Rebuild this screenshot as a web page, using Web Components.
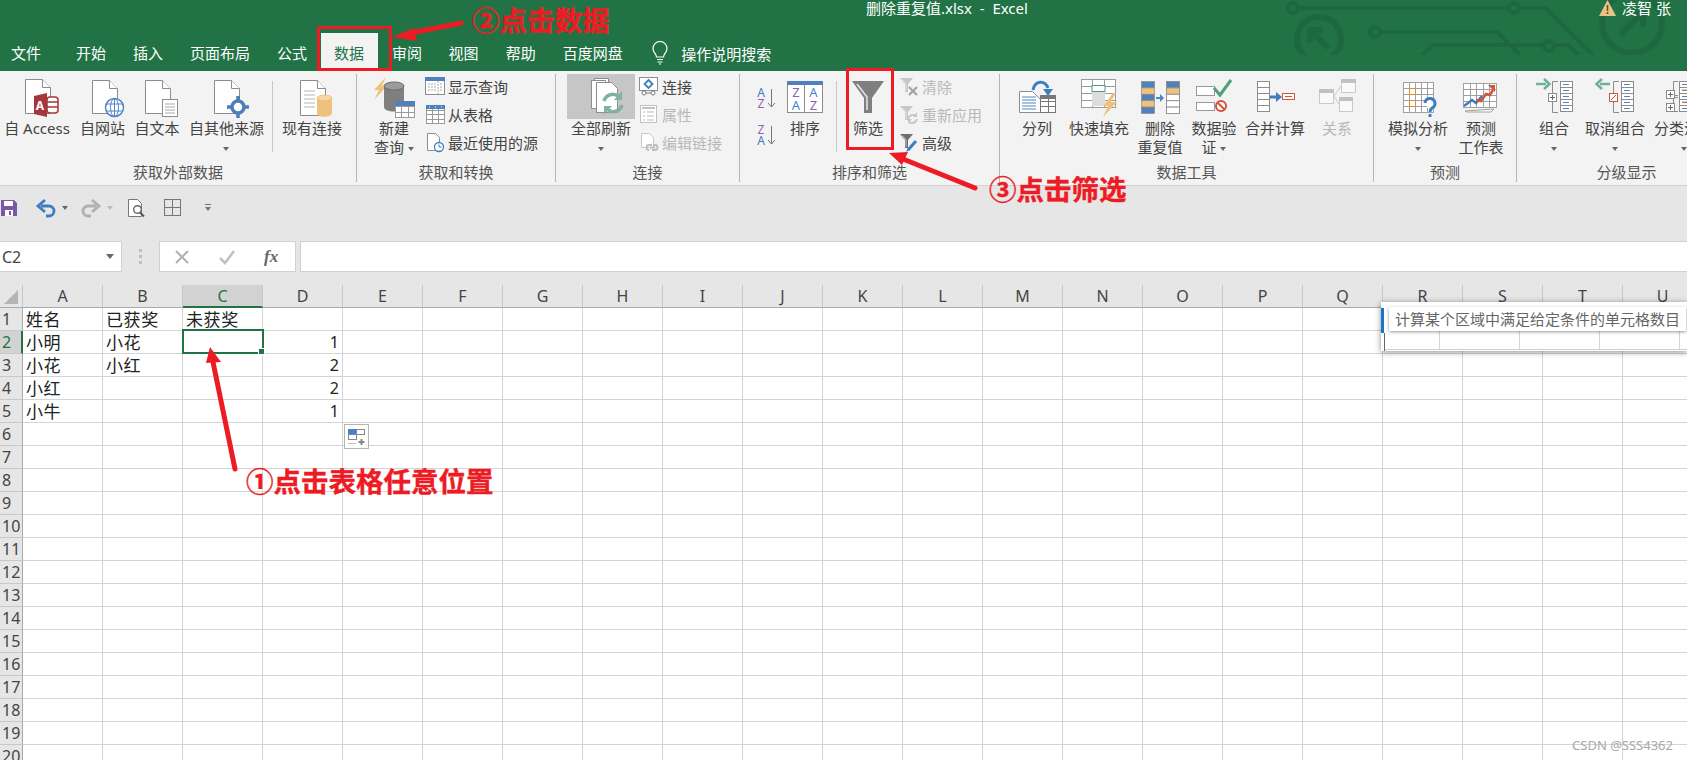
<!DOCTYPE html>
<html lang="zh-CN">
<head>
<meta charset="UTF-8" />
<title>删除重复值.xlsx - Excel</title>
<style>
  html, body { margin: 0; padding: 0; }
  body {
    width: 1687px; height: 760px; overflow: hidden; position: relative;
    background: #e6e6e6; color: #444;
    font: 15px "Noto Sans", "Noto Sans CJK SC", sans-serif;
  }
</style>
</head>
<body>
<x-titlebar></x-titlebar>

<x-ribbon>
  <x-group label="获取外部数据" w="357" pad="0">
    <x-big w="74" icon="access">自 Access</x-big>
    <x-big w="57" icon="web">自网站</x-big>
    <x-big w="52" icon="text">自文本</x-big>
    <x-big w="87" icon="other">自其他来源<br><x-caret></x-caret></x-big>
    <x-vsep tight></x-vsep>
    <x-big w="76" icon="existing">现有连接</x-big>
  </x-group>
  <x-group label="获取和转换" w="199" pad="6">
    <x-big w="62" icon="newquery">新建<br>查询 <x-caret></x-caret></x-big>
    <x-col>
      <x-small icon="showq">显示查询</x-small>
      <x-small icon="fromtable">从表格</x-small>
      <x-small icon="recent">最近使用的源</x-small>
    </x-col>
  </x-group>
  <x-group label="连接" w="184" pad="11">
    <x-big w="68" icon="refresh" hot>全部刷新<br><x-caret></x-caret></x-big>
    <x-col gap="4">
      <x-small icon="conn">连接</x-small>
      <x-small icon="props" off>属性</x-small>
      <x-small icon="links" off>编辑链接</x-small>
    </x-col>
  </x-group>
  <x-group label="排序和筛选" w="260" pad="14">
    <x-sortpair></x-sortpair>
    <x-big w="54" icon="sort">排序</x-big>
    <x-vsep></x-vsep>
    <x-big w="52" icon="funnel">筛选</x-big>
    <x-col gap="5">
      <x-small icon="clear" off>清除</x-small>
      <x-small icon="reapply" off>重新应用</x-small>
      <x-small icon="advanced">高级</x-small>
    </x-col>
  </x-group>
  <x-group label="数据工具" w="374" pad="14">
    <x-big w="46" icon="split">分列</x-big>
    <x-big w="78" icon="flash">快速填充</x-big>
    <x-big w="44" icon="dedupe">删除<br>重复值</x-big>
    <x-big w="64" icon="validate">数据验<br>证 <x-caret></x-caret></x-big>
    <x-big w="58" icon="merge">合并计算</x-big>
    <x-big w="66" icon="relation" off>关系</x-big>
  </x-group>
  <x-group label="预测" w="143" pad="10">
    <x-big w="68" icon="whatif">模拟分析<br><x-caret></x-caret></x-big>
    <x-big w="58" icon="forecast">预测<br>工作表</x-big>
  </x-group>
  <x-group label="分级显示" w="220" pad="12">
    <x-big w="50" icon="grp">组合<br><x-caret></x-caret></x-big>
    <x-big w="72" icon="ungrp">取消组合<br><x-caret></x-caret></x-big>
    <x-big w="66" icon="subtotal">分类汇总<br><x-caret></x-caret></x-big>
  </x-group>
</x-ribbon>

<x-qat></x-qat>
<x-formula></x-formula>
<x-sheet></x-sheet>
<x-notes></x-notes>

<script>
  const doc = (x, y, w, h) =>
    `<path d="M${x}.5 ${y}.5h${w - 8}l8 8v${h - 8}h-${w}z" fill="#fff" stroke="#8c8c8c"/><path d="M${x + w - 8}.5 ${y}.5v8h8" fill="#fff" stroke="#8c8c8c"/>`

  // column of stacked rows, used by the group / merge icons
  const rows = (x, y, w, rh, n, stroke = '#8c8c8c') => {
    let s = ''
    for (let i = 0; i < n; i++) s += `<rect x="${x}.5" y="${y + i * rh}.5" width="${w}" height="${rh}" fill="#fff" stroke="${stroke}"/>`
    return s
  }
  const dashes = (x, y, rh, n, c = '#4a86c5') => {
    let s = ''
    for (let i = 0; i < n; i++) s += `<path d="M${x} ${y + i * rh + rh / 2 + .5}h6" stroke="${c}"/>`
    return s
  }
  const table = (x, y, w, h, cols, rs, stroke = '#9a9a9a') => {
    let s = `<rect x="${x}.5" y="${y}.5" width="${w}" height="${h}" fill="#fff" stroke="${stroke}"/>`
    for (let i = 1; i < cols; i++) s += `<path d="M${x + Math.round(i * w / cols)}.5 ${y}v${h}" stroke="${stroke}"/>`
    for (let i = 1; i < rs; i++) s += `<path d="M${x} ${y + Math.round(i * h / rs)}.5h${w}" stroke="${stroke}"/>`
    return s
  }
  const funnel = (c = '#7f7f7f') => `<path d="M1 2h13l-5 6v8h-3v-8z" fill="${c}"/><path d="M3.5 3.5l3.5 4.5v7" fill="none" stroke="#fff" stroke-opacity=".6"/>`
  const bracket = (x, y, w, h) => `<path d="M${x + w} ${y}.5h-${w - .5}v${h}h${w - .5}" fill="none" stroke="#8c8c8c"/>`
  const plusBox = (x, y, s) => `<rect x="${x}.5" y="${y}.5" width="${s}" height="${s}" fill="#fff" stroke="#8c8c8c"/><path d="M${x + 2} ${y + s / 2 + .5}h${s - 3}M${x + s / 2 + .5} ${y + 2}v${s - 3}" stroke="#666"/>`

  const ICONS = {
    access: doc(12, 3, 25, 34) +
      `<path d="M21 20l13-3v24l-13-3z" fill="#a4373a"/><rect x="34" y="21" width="11" height="16" rx="3" fill="#fff" stroke="#a4373a" stroke-width="1.5"/><path d="M34 26h11M34 31h11" stroke="#a4373a" stroke-width="1.5"/><text x="27" y="34" font-size="12" font-weight="700" fill="#fff" text-anchor="middle">A</text>`,
    web: doc(13, 4, 25, 33) +
      `<circle cx="35.5" cy="31.5" r="9" fill="#fff" stroke="#4f86c6" stroke-width="1.5"/><ellipse cx="35.5" cy="31.5" rx="4" ry="9" fill="none" stroke="#4f86c6"/><path d="M27 28h17M27 35h17M35.5 22v19" stroke="#4f86c6"/>`,
    text: doc(12, 4, 25, 33) +
      `<rect x="29.5" y="23.5" width="15" height="17" fill="#fff" stroke="#8c8c8c"/><path d="M32 28h10M32 31h10M32 34h10M32 37h10" stroke="#a8a8a8"/>`,
    other: doc(11, 4, 25, 33) +
      `<circle cx="35" cy="31" r="6" fill="#fff" stroke="#4a7fb8" stroke-width="3.5"/><path d="M35 20v5M35 37v5M24 31h5M41 31h5" stroke="#4a7fb8" stroke-width="3.5"/>`,
    existing: doc(12, 4, 25, 35) +
      `<path d="M16 15h11M16 19h11M16 23h11M16 27h11M16 31h11" stroke="#b5b5b5"/><path d="M29 22v15c0 5 15 5 15 0v-15z" fill="#eec27c"/><ellipse cx="36.5" cy="22" rx="7.5" ry="3" fill="#f5d79f" stroke="#e0b064" stroke-width=".6"/>`,
    newquery: `<path d="M16 1l-12 13h5l-5 10 13-14h-5z" fill="#eec27c"/><path d="M14 10v21c0 6 20 6 20 0v-21z" fill="#7f7f7f"/><ellipse cx="24" cy="10" rx="10" ry="4" fill="#9b9b9b" stroke="#6d6d6d"/>` +
      table(25, 25, 19, 16, 3, 3) + `<rect x="25" y="25" width="20" height="5" fill="#4f81bd"/>`,
    refresh: `<path d="M17.500 4.500h14v28h-14z" fill="#fff" stroke="#8c8c8c"/><path d="M14.500 6.500h14v28h-14z" fill="#fff" stroke="#8c8c8c"/><path d="M19.500 8.500h15l6 6v24h-21z" fill="#fff" stroke="#8c8c8c"/>` +
      `<path d="M27 27a9 9 0 0 1 15-4" fill="none" stroke="#7fb3a0" stroke-width="3.500"/><path d="M45 17v9h-8z" fill="#7fb3a0"/><path d="M45 31a9 9 0 0 1-15 4" fill="none" stroke="#7fb3a0" stroke-width="3.500"/><path d="M27 41v-9h8z" fill="#7fb3a0"/>`,
    sort: `<rect x="6.500" y="5.500" width="35" height="31" fill="#fff" stroke="#8c8c8c"/><rect x="6" y="5" width="36" height="4" fill="#4f81bd"/><path d="M23.500 9v28" stroke="#8c8c8c"/>` +
      `<g font-size="13" text-anchor="middle"><text x="15" y="21" fill="#8e5fb5">Z</text><text x="15" y="34" fill="#4a86c5">A</text><text x="32.500" y="21" fill="#4a86c5">A</text><text x="32.500" y="34" fill="#8e5fb5">Z</text></g>`,
    funnel: `<path d="M8 5h32l-12 17v15h-8v-15z" fill="#7f7f7f"/><path d="M13 8l10 13v13" fill="none" stroke="#e8e8e8" stroke-width="1.500"/>`,
    split: doc(6, 15, 21, 21).replace(/<path d="M\d+\.5 15\.5v8h8"[^>]*>/, '') +
      `<path d="M9 21h14M9 24h14M9 27h14M9 30h14M9 33h14" stroke="#4a86c5"/>` + table(27, 19, 15, 17, 2, 3, '#777') +
      `<rect x="27" y="19" width="16" height="4" fill="#777"/><path d="M20 14c2-10 12-10 15-2" fill="none" stroke="#3f7dc0" stroke-width="3"/><path d="M30 13h10l-5 7z" fill="#3f7dc0"/>`,
    flash: table(6, 3, 34, 28, 3, 4) + `<rect x="17" y="9.500" width="13" height="6" fill="#fff" stroke="#4f9e7c"/><rect x="17" y="16" width="13" height="14" fill="#ddd"/>` +
      `<path d="M38 17l-10 13h5l-5 11 14-15h-6l5-9z" fill="#eec27c"/>`,
    dedupe: (() => {
      let s = ''
      const a = ['#4f81bd', '#eec27c', '#4f81bd', '#eec27c', '#4f81bd']
      const b = ['#4f81bd', '#eec27c', '#fff', '#fff', '#fff']
      a.forEach((c, i) => s += `<rect x="5.500" y="${5.5 + i * 6.4}" width="13" height="6.400" fill="${c}" stroke="#8c8c8c" stroke-width=".7"/>`)
      b.forEach((c, i) => s += `<rect x="30.500" y="${5.5 + i * 6.4}" width="13" height="6.400" fill="${c}" stroke="#8c8c8c" stroke-width=".9"/>`)
      return s + `<path d="M20 22h5" stroke="#4a86c5" stroke-width="2"/><path d="M24 18l4 4-4 4z" fill="#4a86c5"/>`
    })(),
    validate: `<rect x="6.500" y="10.500" width="18" height="9" fill="#fff" stroke="#9a9a9a"/><rect x="6.500" y="26.500" width="18" height="8" fill="#fff" stroke="#9a9a9a"/>` +
      `<path d="M24 12l6 7 11-15" fill="none" stroke="#4f9e7c" stroke-width="3"/><circle cx="31" cy="30" r="5" fill="#fff" stroke="#d2553a" stroke-width="2"/><path d="M27.500 26.500l7 7" stroke="#d2553a" stroke-width="2"/>`,
    merge: rows(6, 5, 12, 6, 5) + `<path d="M19 21h7" stroke="#3f7dc0" stroke-width="3"/><path d="M25 16l6 5-6 5z" fill="#3f7dc0"/><rect x="31.500" y="17.500" width="12" height="6" fill="#fff" stroke="#d2553a"/><path d="M34 20.500h7" stroke="#d2553a"/>`,
    relation: `<g opacity=".55"><rect x="6.500" y="13.500" width="14" height="14" fill="#fff" stroke="#aaa"/><rect x="6" y="13" width="15" height="4" fill="#999"/><rect x="28.500" y="3.500" width="14" height="13" fill="#fff" stroke="#aaa"/><rect x="28" y="3" width="15" height="4" fill="#999"/><rect x="26.500" y="21.500" width="13" height="14" fill="#fff" stroke="#aaa"/><rect x="26" y="21" width="14" height="4" fill="#999"/><path d="M21 20l7-10M21 20l5 8" stroke="#aaa" fill="none"/></g>`,
    whatif: table(9, 6, 30, 30, 5, 5, '#a0a0a0') + `<rect x="15.500" y="12.500" width="6" height="6" fill="#fff" stroke="#e58a2e"/><rect x="15.500" y="24.500" width="6" height="6" fill="#fff" stroke="#e58a2e"/>` +
      `<path d="M31 27a5 5 0 1 1 7 5c-1.500 1-2 2-2 4" fill="#fff" stroke="#3f7dc0" stroke-width="3"/><rect x="34.500" y="38" width="3" height="3" fill="#3f7dc0"/>`,
    forecast: table(6, 7, 33, 24, 5, 4, '#a0a0a0') + `<path d="M8 35l29-2-3 3h-24z" fill="#fff" stroke="#a0a0a0"/>` +
      `<path d="M7 30l8-6 4 3 6-7" fill="none" stroke="#3f7dc0" stroke-width="2.500"/><path d="M19 24l5 1 5-7 4 1 3-5" fill="none" stroke="#d2553a" stroke-width="2.500"/><path d="M31 9h7v7z" fill="#d2553a"/>`,
    grp: `<path d="M6 8h10" stroke="#6fb09a" stroke-width="2.500"/><path d="M14 3l5.500 5-5.500 5" fill="none" stroke="#6fb09a" stroke-width="2.500"/>` + bracket(22, 5, 6, 31) + plusBox(18, 17, 8) + rows(30, 5, 12, 6, 5) + dashes(33, 5, 6, 5),
    ungrp: `<path d="M9 8h10" stroke="#6fb09a" stroke-width="2.500"/><path d="M11 3l-5.500 5 5.500 5" fill="none" stroke="#6fb09a" stroke-width="2.500"/>` + bracket(22, 5, 6, 31) +
      `<rect x="18.500" y="17.500" width="8" height="8" fill="#fff" stroke="#d2553a"/><path d="M20 24l5-5" stroke="#d2553a"/>` + rows(30, 5, 12, 6, 5) + dashes(33, 5, 6, 5),
    subtotal: bracket(13, 5, 5, 14) + bracket(13, 21, 5, 14) + plusBox(6, 14, 8) + plusBox(6, 27, 8) + rows(19, 5, 12, 6, 5) + dashes(22, 5, 6, 5) + `<path d="M22 14h6M22 26h6" stroke="#e58a2e"/>`,

    // 20x20 ones next to the small ribbon items
    showq: `<rect x=".5" y="1.500" width="19" height="17" fill="#fff" stroke="#8c8c8c"/><rect x="0" y="1" width="20" height="4" fill="#4f81bd"/><path d="M13 5v13M3 8h8M3 11h8M3 14h8M15 8h3M15 11h3M15 14h3" stroke="#aaa" stroke-dasharray="2 1"/>`,
    fromtable: table(1, 1, 18, 18, 3, 4) + `<rect x="1" y="1" width="19" height="4" fill="#4f81bd"/><path d="M4 3h1M10 3h1M16 3h1" stroke="#fff"/>`,
    recent: `<path d="M2.500 1.500h8l4 4v13h-12z" fill="#fff" stroke="#8c8c8c"/><circle cx="14" cy="15" r="4.500" fill="#fff" stroke="#3f7dc0" stroke-width="1.300"/><path d="M14 12.500v2.500h2.500" fill="none" stroke="#3f7dc0"/>`,
    conn: `<rect x=".5" y="1.500" width="18" height="13" fill="#fff" stroke="#8c8c8c"/><path d="M9.500 4l4 4-4 4-4-4z" fill="#fff" stroke="#3f7dc0" stroke-width="1.800"/><circle cx="5" cy="17" r="2" fill="#fff" stroke="#777"/><circle cx="14" cy="17" r="2" fill="#fff" stroke="#777"/><path d="M7 17h5" stroke="#777"/>`,
    props: `<rect x="1.500" y="1.500" width="16" height="17" fill="#fff" stroke="#c3bfc3"/><path d="M3 4h13" stroke="#c3bfc3" stroke-width="2"/><path d="M4 8h2M4 12h2M4 16h2M8 8h7M8 12h7M8 16h7" stroke="#bbb"/>`,
    links: `<path d="M2.500 1.500h8l4 4v10h-12z" fill="#fff" stroke="#c8c8c8"/><path d="M9 15a2.500 2.500 0 0 1 0-5h3M13 10h2a2.500 2.500 0 0 1 0 5h-3M10 12.500h5" transform="translate(1 3)" fill="none" stroke="#bdbdbd" stroke-width="1.800"/>`,
    clear: `<g opacity=".5">${funnel('#9a9a9a')}</g><path d="M10 11l8 8M18 11l-8 8" stroke="#a3a3a3" stroke-width="2.200"/>`,
    reapply: `<g opacity=".5">${funnel('#9a9a9a')}</g><path d="M9 15a5 5 0 0 1 8-3M18 15a5 5 0 0 1-8 3" fill="none" stroke="#c2c8c4" stroke-width="2"/><path d="M18 8v5h-4zM9 20v-5h4z" fill="#c2c8c4"/>`,
    advanced: `${funnel('#6e6e6e')}<path d="M9 18l8-9" stroke="#3f7dc0" stroke-width="3"/><path d="M7 20l1.500-3 1.500 1.500z" fill="#3f7dc0"/>`,

    save: `<path d="M1 1h13l3 3v13h-16z" fill="#7d57a6"/><rect x="4" y="2" width="9" height="5" fill="#fff"/><rect x="5" y="11" width="8" height="6" fill="#fff"/><rect x="9" y="12" width="2" height="4" fill="#7d57a6"/>`,
    undo: `<path d="M4 7h8a5 5 0 0 1 0 10h-3" fill="none" stroke="#3f7dc0" stroke-width="2.800"/><path d="M8 1l-7 6 7 6" fill="none" stroke="#3f7dc0" stroke-width="2.800"/>`,
    redo: `<path d="M14 7h-8a5 5 0 0 0 0 10h3" fill="none" stroke="#b0b0b0" stroke-width="2.800"/><path d="M10 1l7 6-7 6" fill="none" stroke="#b0b0b0" stroke-width="2.800"/>`,
    preview: `<path d="M1.500 1.500h9l4 4v13h-13z" fill="#fff" stroke="#777"/><circle cx="10.500" cy="11.500" r="3.800" fill="#fff" stroke="#666" stroke-width="1.400"/><path d="M13 14.500l4 4" stroke="#555" stroke-width="2"/>`,
    borders: `<rect x=".5" y=".5" width="16" height="16" fill="none" stroke="#777"/><path d="M8.500 0v17M0 8.500h17" stroke="#777"/>`,
    paste: `<rect x="3.500" y="4.500" width="8" height="5" fill="#3f7dee" stroke="#6d7d96"/><rect x="11.500" y="4.500" width="8" height="5" fill="#fff" stroke="#888"/><rect x="3.500" y="9.500" width="8" height="5" fill="#fff" stroke="#888"/><path d="M3.500 18.500h8" stroke="#888" stroke-dasharray="1 1"/><path d="M16.500 14v6M13.500 17h6" stroke="#888" stroke-width="2"/>`,
  }

  class XIcon extends HTMLElement {
    connectedCallback () {
      const w = this.getAttribute('w') || 48
      const h = this.getAttribute('h') || 44
      this.attachShadow({ mode: 'open' }).innerHTML = `
        <style>:host{display:block;width:${w}px;height:${h}px} svg{display:block;overflow:visible}</style>
        <svg width="${w}" height="${h}" viewBox="0 0 ${w} ${h}" font-family="'Noto Sans',sans-serif">${ICONS[this.getAttribute('name')] || ''}</svg>`
    }
  }
  customElements.define('x-icon', XIcon)

  class XCaret extends HTMLElement {
    constructor () {
      super()
      this.attachShadow({ mode: 'open' }).innerHTML = `
        <style>:host{display:inline-block;width:0;height:0;vertical-align:middle;border:3.500px solid transparent;border-top:4px solid #666;border-bottom:0}</style>`
    }
  }
  customElements.define('x-caret', XCaret)

  class XTitlebar extends HTMLElement {
    constructor () {
      super()
      const tabs = ['开始', '插入', '页面布局', '公式', '数据', '审阅', '视图', '帮助', '百度网盘']
      this.attachShadow({ mode: 'open' }).innerHTML = `
        <style>
          :host { display: block; height: 71px; background: #217346; color: #fff; position: relative; overflow: hidden; }
          .deco { position: absolute; left: 0; top: 0; }
          .top { display: flex; height: 33px; position: relative; }
          .name { margin-left: 866px; line-height: 17px; white-space: pre; }
          .user { margin-left: auto; padding-right: 16px; display: flex; gap: 6px; line-height: 17px; height: 17px; }
          .tabs { display: flex; height: 38px; position: relative; }
          .tab { padding: 2px 13.5px 0; line-height: 36px; }
          .tab.file { padding: 2px 21.500px 0 11px; }
          .tab.on { background: #f3f3f3; color: #217346; }
          .tab.on + .tab { margin-left: 1px; padding-right: 13px; }
          .help { display: flex; align-items: center; margin-left: 15px; gap: 12px; padding-top: 2px; }
        </style>
        <svg class="deco" width="1687" height="55" fill="none" stroke="#1d683e" stroke-width="4">
          <path d="M1299 8h209M1520 8h26l47 47M1381 32h116l23 23M1422 55l11-10h110M1555 45h13l10 10"/>
          <circle cx="1293" cy="8" r="5"/><circle cx="1514" cy="8" r="5"/><circle cx="1375" cy="32" r="5"/><circle cx="1549" cy="46" r="5"/>
          <circle cx="1319" cy="39" r="22" stroke-width="6"/><path d="M1312 32l16 16M1310 43v-13h13" stroke-width="6"/>
          <circle cx="1632" cy="23" r="30" stroke-width="6"/><path d="M1620 35l22-22M1628 12h15v15" stroke-width="6"/>
        </svg>
        <div class="top">
          <span class="name">删除重复值.xlsx  -  Excel</span>
          <span class="user">
            <svg width="17" height="16" viewBox="0 0 17 16"><path d="M8.500 0l8.500 16h-17z" fill="#e9c28a"/><path d="M8.500 5v6M8.500 12v2" stroke="#7a4d16" stroke-width="1.600"/></svg>
            <span>凌智 张</span>
          </span>
        </div>
        <div class="tabs">
          <span class="tab file">文件</span>
          ${tabs.map(t => `<span class="tab ${t === '数据' ? 'on' : ''}">${t}</span>`).join('')}
          <span class="help">
            <svg width="18" height="24" viewBox="0 0 18 24" fill="none" stroke="#fff" stroke-width="1.200"><path d="M5.500 16c0-3-3.500-4.500-3.500-8.500a7 7 0 0 1 14 0c0 4-3.500 5.500-3.500 8.500z"/><path d="M6 18.500h6M6.500 21h5M8 23h2"/></svg>
            <span>操作说明搜索</span>
          </span>
        </div>`
    }
  }
  customElements.define('x-titlebar', XTitlebar)

  class XRibbon extends HTMLElement {
    constructor () {
      super()
      this.attachShadow({ mode: 'open' }).innerHTML = `
        <style>
          :host { display: flex; height: 115px; box-sizing: border-box; padding: 3px 0 3px; background: #f3f3f3; border-bottom: 1px solid #d2d2d2; overflow: hidden; }
        </style><slot></slot>`
    }
  }
  customElements.define('x-ribbon', XRibbon)

  class XGroup extends HTMLElement {
    connectedCallback () {
      if (this.shadowRoot) return
      this.attachShadow({ mode: 'open' }).innerHTML = `
        <style>
          :host { display: flex; flex-direction: column; flex: none; box-sizing: border-box; width: ${this.getAttribute('w')}px; border-right: 1px solid #b4b4b4; }
          .body { display: flex; height: 88px; padding-left: ${this.getAttribute('pad')}px; }
          .label { height: 20px; line-height: 20px; text-align: center; white-space: nowrap; color: #555; }
        </style>
        <div class="body"><slot></slot></div>
        <div class="label">${this.getAttribute('label')}</div>`
    }
  }
  customElements.define('x-group', XGroup)

  class XBig extends HTMLElement {
    connectedCallback () {
      if (this.shadowRoot) return
      const hot = this.hasAttribute('hot')
      this.attachShadow({ mode: 'open' }).innerHTML = `
        <style>
          :host { display: flex; flex-direction: column; align-items: center; flex: none; box-sizing: border-box; width: ${this.getAttribute('w')}px; padding-top: 2px; }
          .pic { width: 100%; display: flex; justify-content: center; height: 44px; ${hot ? 'background:#c6c6c6;margin-top:-2px;height:45px;margin-bottom:1px;' : ''} }
          .txt { line-height: 19px; margin-top: -1px; text-align: center; white-space: nowrap; color: ${this.hasAttribute('off') ? '#b8b8b8' : '#444'}; }
        </style>
        <div class="pic"><x-icon name="${this.getAttribute('icon')}"></x-icon></div>
        <div class="txt"><slot></slot></div>`
    }
  }
  customElements.define('x-big', XBig)

  class XCol extends HTMLElement {
    connectedCallback () {
      if (this.shadowRoot) return
      this.attachShadow({ mode: 'open' }).innerHTML = `
        <style>:host{display:flex;flex-direction:column;flex:none;margin-top:-2px;padding-left:${this.getAttribute('gap') || 0}px}</style><slot></slot>`
    }
  }
  customElements.define('x-col', XCol)

  class XSmall extends HTMLElement {
    connectedCallback () {
      if (this.shadowRoot) return
      this.attachShadow({ mode: 'open' }).innerHTML = `
        <style>
          :host { display: flex; align-items: center; gap: 3px; height: 28px; white-space: nowrap; color: ${this.hasAttribute('off') ? '#b8b8b8' : '#444'}; }
        </style>
        <x-icon name="${this.getAttribute('icon')}" w="20" h="20"></x-icon><slot></slot>`
    }
  }
  customElements.define('x-small', XSmall)

  class XVsep extends HTMLElement {
    connectedCallback () {
      if (this.shadowRoot) return
      const m = this.hasAttribute('tight') ? '7px 1px 0 2px' : '7px 5px 0 4px'
      this.attachShadow({ mode: 'open' }).innerHTML = `
        <style>:host{display:block;flex:none;width:1px;height:71px;margin:${m};background:#c6c6c6}</style>`
    }
  }
  customElements.define('x-vsep', XVsep)

  class XSortpair extends HTMLElement {
    constructor () {
      super()
      const az = (a, b, ca, cb) => `
        <svg width="24" height="24" viewBox="0 0 24 24" font-size="12" font-family="'Noto Sans',sans-serif" text-anchor="middle">
          <text x="7" y="11" fill="${ca}">${a}</text><text x="7" y="22" fill="${cb}">${b}</text>
          <path d="M17.500 3v18M14 17l3.500 4 3.500-4" fill="none" stroke="#777"/>
        </svg>`
      this.attachShadow({ mode: 'open' }).innerHTML = `
        <style>:host{display:flex;flex-direction:column;gap:13px;flex:none;width:24px;padding-top:12px} svg{display:block}</style>
        ${az('A', 'Z', '#3f7dc0', '#8e5fb5')}${az('Z', 'A', '#8e5fb5', '#3f7dc0')}`
    }
  }
  customElements.define('x-sortpair', XSortpair)

  class XQat extends HTMLElement {
    constructor () {
      super()
      const car = c => `<span class="c" style="border-top-color:${c}"></span>`
      this.attachShadow({ mode: 'open' }).innerHTML = `
        <style>
          :host { display: flex; align-items: center; height: 44px; padding-bottom: 1px; box-sizing: border-box; }
          .c { display: block; width: 0; height: 0; border: 3.500px solid transparent; border-top: 4px solid #666; border-bottom: 0; }
          x-icon { flex: none; }
          .more { display: flex; flex-direction: column; align-items: center; gap: 2px; margin-left: 24px; }
          .more i { width: 6px; height: 1px; background: #777; }
        </style>
        <x-icon name="save" w="18" h="18"></x-icon>
        <x-icon name="undo" w="18" h="18" style="margin-left:19px"></x-icon><span style="margin:0 0 0 7px">${car('#666')}</span>
        <x-icon name="redo" w="18" h="18" style="margin-left:14px"></x-icon><span style="margin:0 0 0 7px">${car('#bbb')}</span>
        <x-icon name="preview" w="18" h="20" style="margin-left:14px"></x-icon>
        <x-icon name="borders" w="17" h="17" style="margin-left:19px"></x-icon>
        <span class="more"><i></i>${car('#777')}</span>`
    }
  }
  customElements.define('x-qat', XQat)

  class XFormula extends HTMLElement {
    constructor () {
      super()
      this.attachShadow({ mode: 'open' }).innerHTML = `
        <style>
          :host { display: flex; height: 31px; margin-top: 11px; margin-bottom: 13px; align-items: stretch; }
          .box { background: #fff; border: 1px solid #d0d0d0; box-sizing: border-box; display: flex; align-items: center; }
          .name { width: 122px; padding: 0 7px 0 2px; justify-content: space-between; border-left: 0; font-size: 16px; }
          .name i { width: 0; height: 0; border: 4px solid transparent; border-top: 5px solid #666; border-bottom: 0; }
          .dots { width: 37px; display: flex; flex-direction: column; align-items: center; justify-content: center; gap: 3px; }
          .dots i { width: 3px; height: 3px; background: #bdbdbd; }
          .btns { width: 137px; gap: 28px; padding-left: 14px; color: #aaa; }
          .fx { font: italic 700 17px "Liberation Serif", serif; color: #666; }
          .input { flex: 1; margin-left: 4px; border-right: 0; }
        </style>
        <div class="box name"><span>C2</span><i></i></div>
        <div class="dots"><i></i><i></i><i></i></div>
        <div class="box btns">
          <svg width="16" height="16" viewBox="0 0 16 16"><path d="M2 2l12 12M14 2l-12 12" stroke="#b0b0b0" stroke-width="2"/></svg>
          <svg width="18" height="16" viewBox="0 0 18 16"><path d="M2 9l5 5 9-12" fill="none" stroke="#c0c0c0" stroke-width="2.500"/></svg>
          <span class="fx">fx</span>
        </div>
        <div class="box input"></div>`
    }
  }
  customElements.define('x-formula', XFormula)

  class XSheet extends HTMLElement {
    constructor () {
      super()
      const data = {
        A1: '姓名', B1: '已获奖', C1: '未获奖',
        A2: '小明', B2: '小花', D2: 1,
        A3: '小花', B3: '小红', D3: 2,
        A4: '小红', D4: 2,
        A5: '小牛', D5: 1,
      }
      const cols = 'ABCDEFGHIJKLMNOPQRSTUV'.split('')
      let cells = '<div class="corner"><i></i></div>'
      cols.forEach(c => { cells += `<div class="ch ${c === 'C' ? 'sel' : ''}">${c}</div>` })
      for (let r = 1; r <= 20; r++) {
        cells += `<div class="rh ${r === 2 ? 'sel' : ''}">${r}</div>`
        cols.forEach(c => {
          const v = data[c + r]
          cells += `<div class="c ${typeof v === 'number' ? 'num' : ''}">${v === undefined ? '' : v}</div>`
        })
      }
      this.attachShadow({ mode: 'open' }).innerHTML = `
        <style>
          :host { display: block; position: relative; height: 475px; overflow: hidden; background: #fff; }
          .grid { display: grid; grid-template-columns: 23px repeat(22, 80px); grid-auto-rows: 23px; width: 1783px; }
          .corner, .ch, .rh { background: #e6e6e6; box-sizing: border-box; color: #444; }
          .corner { position: relative; border-right: 1px solid #c8c8c8; border-bottom: 1px solid #a9a9a9; }
          .corner i { position: absolute; left: 4px; top: 5px; width: 14px; height: 14px; background: #b4b4b4; clip-path: polygon(100% 0, 100% 100%, 0 100%); }
          .ch { border-right: 1px solid #c8c8c8; border-bottom: 1px solid #a9a9a9; text-align: center; font-size: 16px; line-height: 22px; }
          .ch.sel { background: #d2d2d2; color: #217346; border-bottom: 2px solid #217346; }
          .rh { border-right: 1px solid #a9a9a9; border-bottom: 1px solid #c8c8c8; padding-left: 2px; font-size: 16px; line-height: 22px; }
          .rh.sel { background: #d2d2d2; color: #217346; border-right: 2px solid #217346; }
          .c { box-sizing: border-box; border-right: 1px solid #d4d4d4; border-bottom: 1px solid #d4d4d4; padding: 0 3px; font-size: 17px; letter-spacing: .6px; line-height: 23px; color: #222; white-space: nowrap; }
          .c.num { text-align: right; padding-right: 3px; font-size: 16px; letter-spacing: 0; }
          .selbox { position: absolute; left: 182px; top: 44px; width: 82px; height: 25px; box-sizing: border-box; border: 2px solid #217346; }
          .selbox i { position: absolute; right: -3px; bottom: -3px; width: 5px; height: 5px; background: #217346; border: 1px solid #fff; }
          .tip { position: absolute; left: 1381px; top: 17px; width: 306px; height: 49px; background: #fff; box-shadow: 0 1px 6px rgba(0,0,0,.45); }
          .tip .bar { position: absolute; left: 0; top: 6px; width: 3px; height: 25px; background: #1976c8; }
          .tip .stem { position: absolute; left: 3px; top: 31px; width: 1px; height: 18px; background: #666; }
          .tip .lines { position: absolute; left: 4px; right: 0; top: 29px; height: 18px; border-bottom: 1px solid #cfcfcf;
            background: linear-gradient(90deg, #d4d4d4 1px, transparent 1px) 54px 0 / 80px 100%; }
          .tip .txt { position: absolute; left: 8px; top: 5px; right: 1px; height: 24px; line-height: 24px; padding-left: 6px; background: #fff; color: #666; white-space: nowrap; box-shadow: 0 1px 3px rgba(0,0,0,.4); }
          .paste { position: absolute; left: 344px; top: 139px; width: 25px; height: 25px; box-sizing: border-box; background: #fff; border: 1px solid #b5b5b5; }
        </style>
        <div class="grid">${cells}</div>
        <div class="selbox"><i></i></div>
        <div class="paste"><x-icon name="paste" w="23" h="23"></x-icon></div>
        <div class="tip">
          <div class="bar"></div><div class="stem"></div><div class="lines"></div>
          <div class="txt">计算某个区域中满足给定条件的单元格数目</div>
        </div>`
    }
  }
  customElements.define('x-sheet', XSheet)

  // red callouts pasted on top of the screenshot
  class XNotes extends HTMLElement {
    constructor () {
      super()
      this.attachShadow({ mode: 'open' }).innerHTML = `
        <style>
          :host { position: absolute; left: 0; top: 0; width: 1687px; height: 760px; pointer-events: none; }
          svg { position: absolute; left: 0; top: 0; }
          .n { position: absolute; color: #ed1c24; font: 700 27.500px/30px "Noto Sans CJK SC", sans-serif; white-space: nowrap; -webkit-text-stroke: .4px #ed1c24; }
          .mark { position: absolute; right: 14px; bottom: 6px; color: #a8a8a8; font-size: 13px; line-height: 18px; }
        </style>
        <svg width="1687" height="760" fill="none" stroke="#ed1c24">
          <rect x="318.500" y="27.500" width="72" height="42" stroke-width="3"/>
          <rect x="847.500" y="69.500" width="45" height="79" stroke-width="3"/>
          <path d="M461 23l-50 10" stroke-width="5" stroke-linecap="round"/>
          <path d="M392 37l22-9 3 13z" fill="#ed1c24" stroke="none"/>
          <path d="M975 188l-72-29" stroke-width="5" stroke-linecap="round"/>
          <path d="M889 153l19-1-6 13z" fill="#ed1c24" stroke="none"/>
          <path d="M235 469l-22-107" stroke-width="5" stroke-linecap="round"/>
          <path d="M210 347l11 15-15 1z" fill="#ed1c24" stroke="none"/>
        </svg>
        <span class="n" style="left:472px;top:4px">②点击数据</span>
        <span class="n" style="left:989px;top:173px">③点击筛选</span>
        <span class="n" style="left:246px;top:465px">①点击表格任意位置</span>
        <span class="mark">CSDN @SSS4362</span>`
    }
  }
  customElements.define('x-notes', XNotes)
</script>
</body>
</html>
